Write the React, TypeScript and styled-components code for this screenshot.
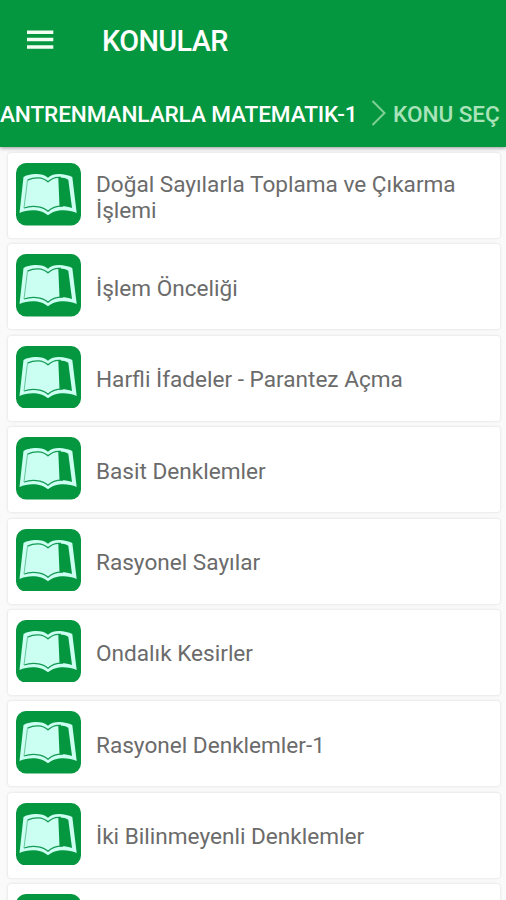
import React from "react";
import styled, { createGlobalStyle } from "styled-components";

const GlobalStyle = createGlobalStyle`
  * { box-sizing: border-box; }
  html, body { margin: 0; padding: 0; background: #fafafa; }
  body { font-family: Roboto, "Liberation Sans", sans-serif; }
`;

const Screen = styled.div`
  width: 100%;
  height: 900px;
  overflow: hidden;
  display: flex;
  flex-direction: column;
  background: #fafafa;
`;

const Header = styled.header`
  flex: none;
  height: 146.500px;
  background: #04973f;
  color: #fff;
  box-shadow: 0 1px 4px rgba(0, 0, 0, 0.4);
  z-index: 1;
`;

const Toolbar = styled.div`
  height: 82px;
  display: flex;
  align-items: center;
  padding-left: 27px;
`;

const MenuIcon = styled.svg`
  width: 27px;
  height: 20px;
  margin-top: -3px;
  margin-right: 48px;
`;

const Title = styled.h1`
  margin: 0;
  font-size: 28.8px;
  font-weight: 500;
  line-height: 34px;
  letter-spacing: -0.6px;
`;

const Breadcrumb = styled.nav`
  height: 64px;
  display: flex;
  align-items: center;
  font-size: 22.6px;
  font-weight: 500;
  white-space: nowrap;
`;

const Crumb = styled.span<{ $muted?: boolean; $width: number }>`
  width: ${(p) => p.$width}px;
  color: ${(p) => (p.$muted ? "#a9e3b9" : "#fff")};
  letter-spacing: ${(p) => (p.$muted ? "-0.05px" : "-0.12px")};
`;

const Chevron = styled.svg`
  width: 15px;
  height: 26px;
  margin: -2px 7px 0 15px;
`;

const List = styled.ul`
  list-style: none;
  margin: 0;
  padding: 6.500px 6px 0 8px;
  display: flex;
  flex-direction: column;
  gap: 6.4px;
`;

const Card = styled.li`
  flex: none;
  height: 85px;
  display: flex;
  align-items: flex-start;
  padding: 10px 20px 0 8px;
  background: #fff;
  border-radius: 3px;
  box-shadow: 0 0 3px rgba(0, 0, 0, 0.14);
`;

const BookIcon = styled.svg`
  flex: none;
  width: 65px;
  height: 62.5px;
  margin-right: 15px;
`;

const Label = styled.span`
  height: 65px;
  padding-top: 4px;
  display: flex;
  align-items: center;
  font-size: 22.6px;
  line-height: 26px;
  color: #6b6b6b;
`;

const topics: { id: number; name?: string }[] = [
  { id: 1, name: "Doğal Sayılarla Toplama ve Çıkarma İşlemi" },
  { id: 2, name: "İşlem Önceliği" },
  { id: 3, name: "Harfli İfadeler - Parantez Açma" },
  { id: 4, name: "Basit Denklemler" },
  { id: 5, name: "Rasyonel Sayılar" },
  { id: 6, name: "Ondalık Kesirler" },
  { id: 7, name: "Rasyonel Denklemler-1" },
  { id: 8, name: "İki Bilinmeyenli Denklemler" },
  { id: 9 },
];

function Book() {
  return (
    <BookIcon viewBox="0 0 65 62.5">
      <rect width="65" height="62.5" rx="10" fill="#04973f" />
      <path
        d="M7.500 14C12 11 26 8.800 32 14.800C38 8.800 50 11 56.300 14L60.700 50C51 45.500 38 46.500 32 52.300C26 46.500 13 45.500 3.500 50Z"
        fill="#cbfff1"
      />
      <path
        d="M11.500 17.200C18 14 26.500 13.500 32 18.800C37 14 42 14 45 14.500M8 45C15 42.500 26 42.500 32 48.200C37 43.500 42 43 47 43.200"
        fill="none"
        stroke="#159b55"
        strokeWidth="1.300"
      />
      <path d="M11.500 17.200L8 45" fill="none" stroke="#66c79c" strokeWidth="1" />
      <path
        d="M42.300 14.700C46 14.300 49.500 15.300 52.300 16.800L56 45C52 43.400 47.500 43 43.500 43.300Z"
        fill="#04973f"
      />
    </BookIcon>
  );
}

export default function App() {
  return (
    <Screen>
      <GlobalStyle />
      <Header>
        <Toolbar>
          <MenuIcon viewBox="0 0 27 20">
            <path d="M0 2.300H26.300M0 9.500H26.300M0 16.900H26.300" stroke="#f4fff4" strokeWidth="3.500" />
          </MenuIcon>
          <Title>KONULAR</Title>
        </Toolbar>
        <Breadcrumb>
          <Crumb $width={356}>ANTRENMANLARLA MATEMATIK-1</Crumb>
          <Chevron viewBox="0 0 15 26">
            <path d="M1.500 1L13.500 13L1.500 25" fill="none" stroke="#7fd096" strokeWidth="2" />
          </Chevron>
          <Crumb $muted $width={107}>KONU SEÇ</Crumb>
        </Breadcrumb>
      </Header>
      <List>
        {topics.map((topic) => (
          <Card key={topic.id}>
            <Book />
            {topic.name && <Label>{topic.name}</Label>}
          </Card>
        ))}
      </List>
    </Screen>
  );
}
